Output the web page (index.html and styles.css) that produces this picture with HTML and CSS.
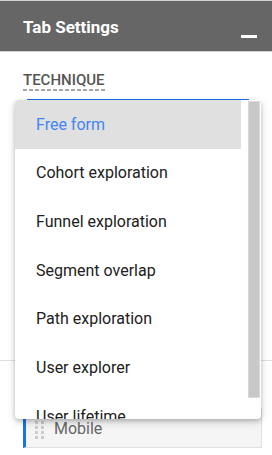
FILE: index.html
```html
<!DOCTYPE html>
<html lang="en">
<head>
    <meta charset="UTF-8">
    <meta name="viewport" content="width=device-width, initial-scale=1.0">
    <title>Tab Settings</title>
    <link rel="stylesheet" href="styles.css">
</head>
<body>
    <div class="panel">
        <div class="panel-header">
            <span class="panel-title">Tab Settings</span>
            <span class="minimize"></span>
        </div>

        <div class="section">
            <span class="section-label">TECHNIQUE</span>
            <div class="select-field"></div>
        </div>

        <div class="divider"></div>

        <div class="section">
            <div class="chip">
                <span class="handle">
                    <i></i><i></i><i></i><i></i><i></i><i></i><i></i><i></i>
                </span>
                <span class="chip-text">Mobile</span>
            </div>
        </div>

        <div class="menu">
            <ul class="menu-list">
                <li class="menu-item selected">Free form</li>
                <li class="menu-item">Cohort exploration</li>
                <li class="menu-item">Funnel exploration</li>
                <li class="menu-item">Segment overlap</li>
                <li class="menu-item">Path exploration</li>
                <li class="menu-item">User explorer</li>
                <li class="menu-item">User lifetime</li>
            </ul>
            <div class="scroll-track">
                <div class="scroll-thumb"></div>
            </div>
        </div>
    </div>
</body>
</html>
```

FILE: styles.css
```css
body {
    margin: 0;
    width: 272px;
    height: 455px;
    overflow: hidden;
    background: #ffffff;
    font-family: Roboto, "Liberation Sans", sans-serif;
}

.panel {
    position: relative;
    height: 455px;
}

.panel-header {
    height: 50px;
    background: #666666;
    border-top: 1px solid #d4d4d4;
    border-bottom: 1px solid #d0d0d0;
    display: flex;
    align-items: center;
    justify-content: space-between;
    padding: 0 15px 0 23px;
}

.panel-title {
    color: #ffffff;
    font-size: 17px;
    font-weight: 700;
    margin-top: 1px;
}

.minimize {
    align-self: flex-end;
    width: 16px;
    height: 3px;
    margin-bottom: 13px;
    background: #ffffff;
}

.section {
    padding: 0 20px 0 23px;
}

.section-label {
    display: inline-block;
    margin-top: 20px;
    font-size: 15px;
    line-height: 17px;
    font-weight: 500;
    color: #555555;
    padding-bottom: 2px;
    background: repeating-linear-gradient(to right, #a6a6a6 0 4px, transparent 4px 6px) left bottom / 100% 2px no-repeat;
}

.select-field {
    margin-left: 4px;
    width: 222px;
    height: 8px;
    border-bottom: 1px solid #1a73e8;
}

.divider {
    margin-top: 260px;
    height: 1px;
    background: #e0e0e0;
}

.chip {
    margin-top: 47px;
    height: 38px;
    width: 226px;
    display: flex;
    align-items: center;
    background: #f5f5f5;
    border: 1px solid #e0e0e0;
    border-left: 3px solid #1a73e8;
    padding-left: 9px;
}

.handle {
    display: grid;
    grid-template-columns: 3px 3px;
    gap: 2px 3px;
    margin-top: 4px;
}

.handle i {
    width: 3px;
    height: 3px;
    background: #cccccc;
}

.chip-text {
    margin-left: 10px;
    font-size: 16px;
    color: #666666;
}

.menu {
    position: absolute;
    top: 100px;
    left: 15px;
    width: 246px;
    height: 319px;
    background: #ffffff;
    border-radius: 4px;
    box-shadow: 0 2px 4px rgba(0, 0, 0, 0.2), 0 3px 10px rgba(0, 0, 0, 0.14);
    display: flex;
    overflow: hidden;
}

.menu-list {
    list-style: none;
    margin: 0;
    padding: 0;
    width: 226px;
}

.menu-item {
    height: 48.67px;
    display: flex;
    align-items: center;
    padding-left: 21px;
    font-size: 16px;
    color: #212121;
}

.menu-item.selected {
    background: #e0e0e0;
    color: #4285f4;
}

.scroll-track {
    padding: 1px 1px 0 7px;
}

.scroll-thumb {
    width: 10px;
    height: 295px;
    background: #c8c8c8;
    border: 1px solid #d9d9d9;
}
```
